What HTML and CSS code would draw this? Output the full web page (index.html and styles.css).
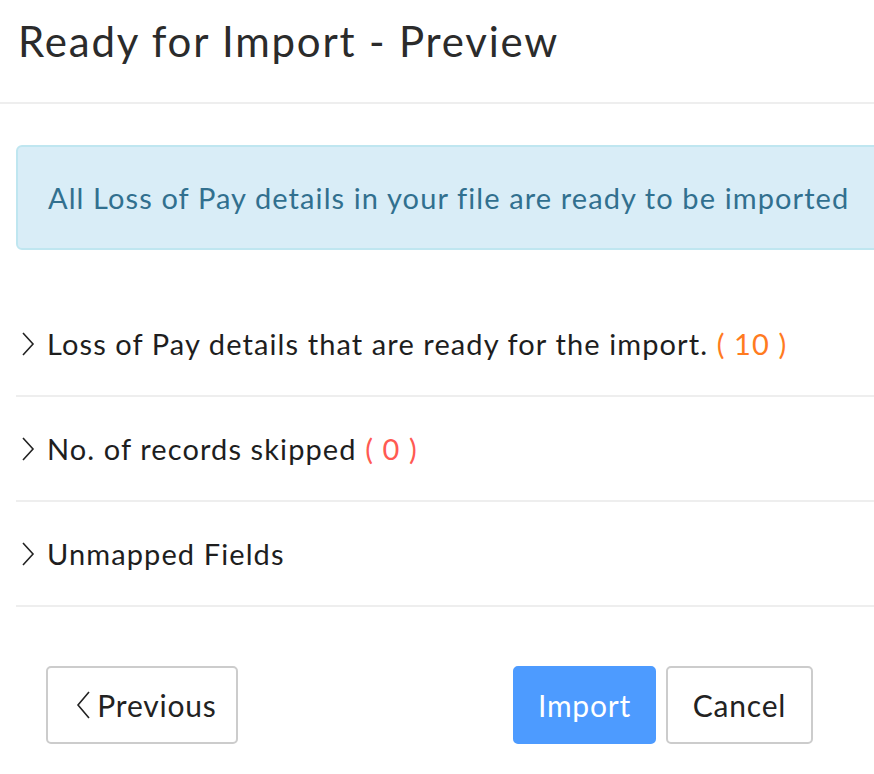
FILE: index.html
```html
<!DOCTYPE html>
<html>
<head>
<meta charset="utf-8">
<link rel="stylesheet" href="styles.css">
</head>
<body>
<div class="page">
  <header class="header">
    <h1 class="title">Ready for Import - Preview</h1>
  </header>
  <main class="content">
    <div class="alert">All Loss of Pay details in your file are ready to be imported</div>
    <div class="sections">
      <div class="row">
        <svg class="chev" width="14" height="24" viewBox="0 0 14 24"><polyline points="2,1 12,12 2,23" fill="none" stroke="#222" stroke-width="1.6"/></svg>
        <span class="label">Loss of Pay details that are ready for the import. <span class="count orange">( 10 )</span></span>
      </div>
      <div class="row">
        <svg class="chev" width="14" height="24" viewBox="0 0 14 24"><polyline points="2,1 12,12 2,23" fill="none" stroke="#222" stroke-width="1.6"/></svg>
        <span class="label">No. of records skipped <span class="count red">( 0 )</span></span>
      </div>
      <div class="row">
        <svg class="chev" width="14" height="24" viewBox="0 0 14 24"><polyline points="2,1 12,12 2,23" fill="none" stroke="#222" stroke-width="1.6"/></svg>
        <span class="label">Unmapped Fields</span>
      </div>
    </div>
    <div class="actions">
      <button class="btn btn-prev"><svg class="prev-chev" width="16" height="28" viewBox="0 0 16 28"><polyline points="14,1 3,14 14,27" fill="none" stroke="#222" stroke-width="1.6"/></svg>Previous</button>
      <div class="right">
        <button class="btn btn-primary">Import</button>
        <button class="btn btn-cancel">Cancel</button>
      </div>
    </div>
  </main>
</div>
</body>
</html>
```
FILE: styles.css
```css
html, body {
  margin: 0;
  padding: 0;
  overflow: hidden;
  background: #fff;
}
body {
  font-family: Lato, "Noto Sans", sans-serif;
  color: #222;
}
.page {
  width: 874px;
}
.header {
  height: 102px;
  border-bottom: 2px solid #eeeeee;
  display: flex;
  align-items: flex-start;
}
.title {
  margin: 15px 0 0 18px;
  font-size: 42px;
  font-weight: 400;
  line-height: 52px;
  color: #2b2b2b;
  letter-spacing: 1.8px;
}
.content {
  padding-left: 16px;
}
.alert {
  margin-top: 41px;
  margin-right: -20px;
  height: 101px;
  border: 2px solid #bfe6f0;
  border-radius: 6px;
  background: #d9edf7;
  color: #31708f;
  font-size: 29px;
  letter-spacing: 1.1px;
  display: flex;
  align-items: center;
  padding-left: 30px;
}
.sections {
  margin-top: 42px;
}
.row {
  height: 103px;
  border-bottom: 2px solid #eeeeee;
  display: flex;
  align-items: center;
  font-size: 29px;
  letter-spacing: 1.1px;
  color: #1e1e1e;
}
.chev {
  margin-left: 5px;
  margin-right: 12px;
  flex: none;
}
.count.orange { color: #ff7b1f; }
.count.red { color: #ff5a52; }
.actions {
  margin-top: 59px;
  display: flex;
  padding-left: 30px;
}
.right {
  margin-left: 275px;
  display: flex;
  gap: 10px;
}
.btn {
  height: 78px;
  font-family: inherit;
  font-size: 30px;
  letter-spacing: 0.8px;
  border-radius: 5px;
  border: 2px solid #cccccc;
  background: #fff;
  color: #222;
  display: flex;
  align-items: center;
  justify-content: center;
  padding: 0;
}
.btn-prev {
  width: 192px;
  padding-left: 8px;
}
.prev-chev {
  margin-right: 6px;
}
.btn-primary {
  width: 143px;
  background: #4d9bff;
  border-color: #4d9bff;
  color: #fff;
}
.btn-cancel {
  width: 147px;
}
```
